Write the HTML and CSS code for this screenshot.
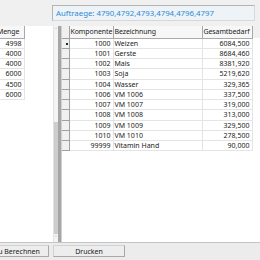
FILE: index.html
```html
<!DOCTYPE html>
<html lang="de">
<head>
  <meta charset="UTF-8">
  <title>Bedarf</title>
  <link rel="stylesheet" href="styles.css">
</head>
<body>
  <div class="window">
    <div class="top-bar">
      <div class="order-box">Auftraege: 4790,4792,4793,4794,4796,4797</div>
    </div>

    <div class="main">
      <!-- linke Liste: Mengen -->
      <div class="left-pane">
        <table class="grid left-grid">
          <thead>
            <tr><th class="col-menge">Menge</th><th class="filler"></th></tr>
          </thead>
          <tbody>
            <tr><td class="num">4998</td><td class="filler"></td></tr>
            <tr><td class="num">4000</td><td class="filler"></td></tr>
            <tr><td class="num">4000</td><td class="filler"></td></tr>
            <tr><td class="num">6000</td><td class="filler"></td></tr>
            <tr><td class="num">4500</td><td class="filler"></td></tr>
            <tr><td class="num">6000</td><td class="filler"></td></tr>
          </tbody>
        </table>
      </div>
      <div class="vscroll">
        <span class="arrow up">&#708;</span>
        <div class="track"></div>
        <div class="thumb"></div>
        <span class="arrow down">&#709;</span>
      </div>
      <div class="splitter"></div>

      <!-- rechte Liste: Komponenten -->
      <div class="right-pane">
        <table class="grid right-grid">
          <thead>
            <tr>
              <th class="rowhead"></th>
              <th class="col-komp">Komponente</th>
              <th class="col-bez">Bezeichnung</th>
              <th class="col-ges">Gesamtbedarf</th>
              <th class="filler"></th>
            </tr>
          </thead>
          <tbody>
            <tr><td class="rowhead current"><span class="dot"></span></td><td class="num">1000</td><td>Weizen</td><td class="num">6084,500</td><td class="filler"></td></tr>
            <tr><td class="rowhead"></td><td class="num">1001</td><td>Gerste</td><td class="num">8684,460</td><td class="filler"></td></tr>
            <tr><td class="rowhead"></td><td class="num">1002</td><td>Mais</td><td class="num">8381,920</td><td class="filler"></td></tr>
            <tr><td class="rowhead"></td><td class="num">1003</td><td>Soja</td><td class="num">5219,620</td><td class="filler"></td></tr>
            <tr><td class="rowhead"></td><td class="num">1004</td><td>Wasser</td><td class="num">329,365</td><td class="filler"></td></tr>
            <tr><td class="rowhead"></td><td class="num">1006</td><td>VM 1006</td><td class="num">337,500</td><td class="filler"></td></tr>
            <tr><td class="rowhead"></td><td class="num">1007</td><td>VM 1007</td><td class="num">319,000</td><td class="filler"></td></tr>
            <tr><td class="rowhead"></td><td class="num">1008</td><td>VM 1008</td><td class="num">313,000</td><td class="filler"></td></tr>
            <tr><td class="rowhead"></td><td class="num">1009</td><td>VM 1009</td><td class="num">329,500</td><td class="filler"></td></tr>
            <tr><td class="rowhead"></td><td class="num">1010</td><td>VM 1010</td><td class="num">278,500</td><td class="filler"></td></tr>
            <tr><td class="rowhead"></td><td class="num">99999</td><td>Vitamin Hand</td><td class="num">90,000</td><td class="filler"></td></tr>
          </tbody>
        </table>
      </div>
    </div>

    <div class="button-bar">
      <button class="btn btn-calc">Zu Berechnen</button>
      <button class="btn">Drucken</button>
    </div>
  </div>
</body>
</html>
```

FILE: styles.css
```css
* {
  margin: 0;
  padding: 0;
  box-sizing: border-box;
}

body {
  width: 260px;
  height: 260px;
  overflow: hidden;
  background-color: #f0f0f0;
  font-family: "Noto Sans", "Open Sans", sans-serif;
  font-size: 7px;
  color: #222;
}

.window {
  display: flex;
  flex-direction: column;
  height: 260px;
}

/* Kopfzeile mit Auftragsnummern */
.top-bar {
  height: 26px;
  padding: 5px 5px 0 52px;
}

.order-box {
  height: 16px;
  line-height: 14px;
  padding-left: 3px;
  background-color: #eef3f7;
  border: 1px solid #b4b4b4;
  border-right-color: #d8d8d8;
  border-bottom-color: #d8d8d8;
  color: #2d8ad6;
  font-size: 7.8px;
  white-space: nowrap;
}

.main {
  display: flex;
  height: 216px;
}

.left-pane {
  width: 57px;
  margin-left: -4px;
  background-color: #fff;
  overflow: hidden;
}

.right-pane {
  flex: 1;
  background-color: #fff;
  overflow: hidden;
}

/* Scrollbar der linken Liste */
.vscroll {
  width: 5px;
  display: flex;
  flex-direction: column;
  background-color: #f4f4f4;
  border-left: 1px solid #e2e2e2;
}

.vscroll .track {
  flex: 1;
}

.vscroll .thumb {
  height: 112px;
  background-color: #cdcdcd;
}

.vscroll .arrow {
  height: 8px;
  font-size: 5px;
  line-height: 8px;
  text-align: center;
  color: #606060;
}

.splitter {
  width: 4px;
  background-color: #a6a6a6;
  border-right: 1px solid #d0d0d0;
}

/* Tabellen */
.grid {
  border-collapse: collapse;
  table-layout: fixed;
  width: 100%;
}

.grid th {
  height: 12px;
  padding: 0 0 0 1px;
  font-weight: normal;
  text-align: left;
  white-space: nowrap;
  overflow: hidden;
  background-color: #f7f7f7;
  border-right: 1px solid #a9a9a9;
  border-bottom: 1px solid #a9a9a9;
  font-size: 7px;
  letter-spacing: -0.1px;
}

.grid td {
  height: 10.25px;
  padding: 0 2px 0 1px;
  line-height: 9px;
  white-space: nowrap;
  overflow: hidden;
  border-right: 1px solid #e4e4e4;
  border-bottom: 1px solid #e4e4e4;
}

.grid td.num {
  text-align: right;
}

.grid th.filler,
.grid td.filler {
  border: none;
}

.left-grid th.filler {
  background-color: #fff;
}

.left-grid .col-menge {
  width: 28px;
}

.right-grid .rowhead {
  width: 7px;
  padding: 0;
  background-color: #f0f0f0;
  border-right: 1px solid #a0a0a0;
  border-bottom: 1px solid #a0a0a0;
  position: relative;
}

.right-grid .col-komp {
  width: 44px;
}

.right-grid .col-bez {
  width: 89px;
}

.right-grid .col-ges {
  width: 50px;
}

.right-grid th.filler {
  background-color: #f0f0f0;
}

.rowhead .dot {
  position: absolute;
  right: 1px;
  top: 4px;
  width: 2px;
  height: 2px;
  background-color: #222;
}

/* Knopfleiste */
.button-bar {
  flex: 1;
  display: flex;
  gap: 4px;
  padding-top: 2px;
  border-top: 1px solid #c4c4c4;
  background-color: #ececec;
}

.btn {
  width: 72px;
  height: 12px;
  font-family: inherit;
  font-size: 7px;
  color: #222;
  background-color: #ededed;
  border: 1px solid #d2d2d2;
  border-right-color: #a8a8a8;
  border-bottom-color: #a8a8a8;
}

.btn-calc {
  width: 64px;
  margin-left: -15px;
}
```
